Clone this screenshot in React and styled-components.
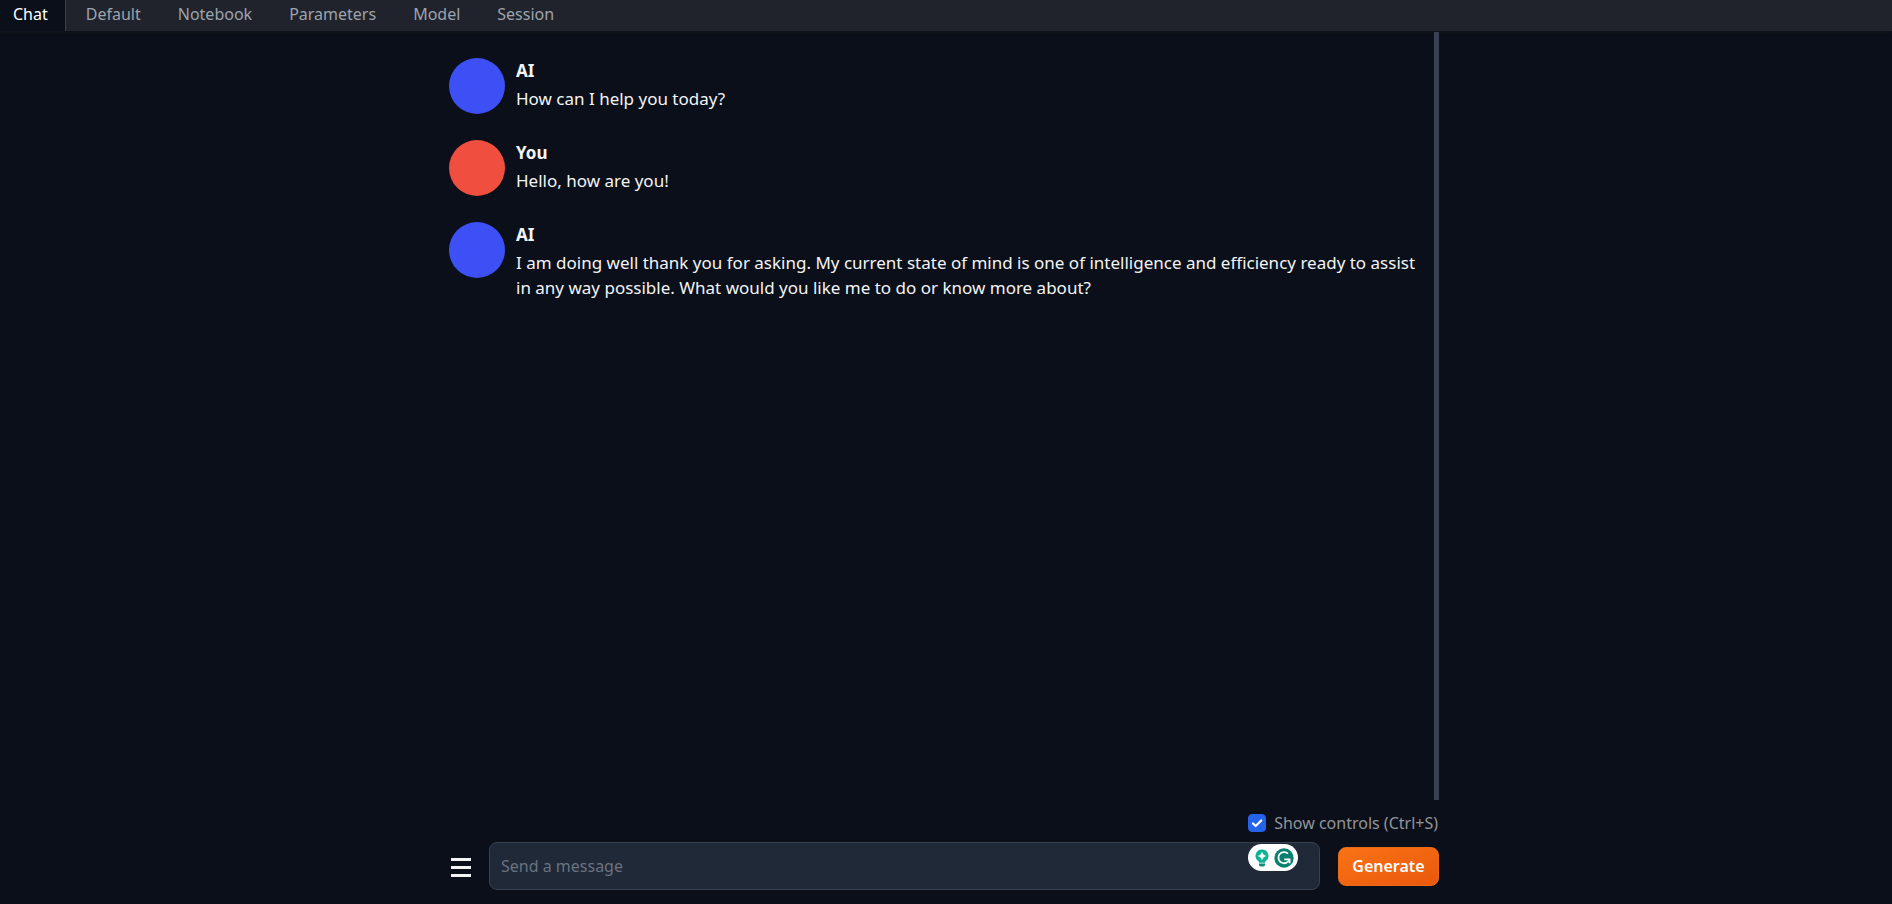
import React, { useState } from "react";
import styled, { createGlobalStyle } from "styled-components";

const GlobalStyle = createGlobalStyle`
  *, *::before, *::after { box-sizing: border-box; }
  body {
    margin: 0;
    background: #0b0f19;
    color: #f3f4f6;
    font-family: "Noto Sans", sans-serif;
    font-size: 16px;
  }
  button, input { font: inherit; }
`;

const Page = styled.div`
  min-height: 100vh;
  display: flex;
  flex-direction: column;
`;

const TabBar = styled.nav`
  display: flex;
  height: 31px;
  background: #20232b;
  box-shadow: 0 1px 3px #16161a;
`;

const Tab = styled.button`
  padding: 0 17px 2px 20px;
  border: 0;
  background: none;
  color: #9ca3af;
  line-height: 29px;
  cursor: pointer;

  &[aria-current="page"] {
    padding: 0 17px 2px 13px;
    border-right: 1px solid #374151;
    background: #0b0f19;
    color: #ffffff;
  }
`;

const Main = styled.main`
  flex: 1;
  display: flex;
  flex-direction: column;
  width: 100%;
  max-width: 994px;
  margin: 0 auto;
  padding: 1px 4px 14px 0;
`;

const Messages = styled.section`
  flex: 1;
  display: flex;
  flex-direction: column;
  gap: 26px;
  padding: 26px 12px 26px 0;
  border-right: 5px solid #374151;
`;

const Message = styled.article`
  display: grid;
  grid-template-columns: 56px 1fr;
  column-gap: 11px;
`;

const Avatar = styled.div`
  width: 56px;
  height: 56px;
  border-radius: 50%;
  background: ${(p) => (p.$user ? "#f04e3e" : "#3c50f5")};
`;

const Name = styled.div`
  font-weight: 700;
  font-size: 17px;
  line-height: 25px;
  margin-bottom: 3px;
`;

const Text = styled.p`
  margin: 0;
  font-size: 17px;
  line-height: 25px;
`;

const Controls = styled.label`
  align-self: flex-end;
  display: flex;
  align-items: center;
  gap: 8px;
  height: 42px;
  padding: 4px 1px 0 0;
  color: #93959a;
`;

const CheckBox = styled.input`
  appearance: none;
  width: 18px;
  height: 18px;
  margin: 0;
  border: 1px solid #2563eb;
  border-radius: 4px;

  &:checked {
    background: #2563eb;
  }
`;

const CheckWrap = styled.span`
  position: relative;
  display: flex;

  svg {
    position: absolute;
    inset: 0;
    pointer-events: none;
  }
`;

const Composer = styled.form`
  display: flex;
  align-items: center;
`;

const MenuButton = styled.button`
  display: flex;
  flex-direction: column;
  gap: 5px;
  width: 40px;
  padding: 2px 18px 0 2px;
  border: 0;
  background: none;
`;

const MenuLine = styled.span`
  width: 20px;
  height: 3px;
  background: #f3f4f6;
`;

const Field = styled.div`
  position: relative;
  flex: 1;
  display: flex;
`;

const Input = styled.input`
  width: 100%;
  height: 48px;
  padding: 0 11px;
  border: 1px solid #374151;
  border-radius: 8px;
  background: #1f2937;
  color: #f3f4f6;
  outline: none;

  &::placeholder { color: #6b7280; opacity: 1; }
`;

const Assistant = styled.div`
  position: absolute;
  top: 2px;
  right: 22px;
  display: flex;
  align-items: center;
  gap: 5px;
  height: 27px;
  padding: 0 4px 0 7px;
  border-radius: 14px;
  background: #ffffff;
`;

const Generate = styled.button`
  width: 101px;
  height: 39px;
  margin-left: 18px;
  padding: 0;
  border: 1px solid #ea6a17;
  border-radius: 8px;
  background: linear-gradient(to bottom right, #f97316, #ea580c);
  color: #ffffff;
  font-weight: 600;
  cursor: pointer;
`;

const tabs = ["Chat", "Default", "Notebook", "Parameters", "Model", "Session"];

const messages = [
  { name: "AI", text: "How can I help you today?" },
  { name: "You", user: true, text: "Hello, how are you!" },
  {
    name: "AI",
    text: "I am doing well thank you for asking. My current state of mind is one of intelligence and efficiency ready to assist in any way possible. What would you like me to do or know more about?",
  },
];

function BulbIcon() {
  return (
    <svg width="14" height="18" viewBox="0 0 14 18" aria-hidden="true">
      <path d="M7 0.5a6.4 6.4 0 0 0-3.8 11.6c.6.5.8 1 .8 1.6h6c0-.6.2-1.1.8-1.6A6.4 6.4 0 0 0 7 .5Z" fill="#0fb393" />
      <path d="M7 3.4 8.2 5.8 10.6 7 8.2 8.2 7 10.6 5.8 8.2 3.4 7 5.8 5.8Z" fill="#fff" stroke="#fff" strokeWidth="0.6" />
      <path d="M4 14.4h6v1.4q0 1.7-1.7 1.7H5.7Q4 17.5 4 15.8Z" fill="#0b8f78" />
    </svg>
  );
}

function CircleArrowIcon() {
  return (
    <svg width="20" height="20" viewBox="0 0 20 20" aria-hidden="true">
      <circle cx="10" cy="10" r="9.7" fill="#07806f" />
      <path d="M14 5.7A5.6 5.6 0 1 0 15.3 11.5" fill="none" stroke="#fff" strokeWidth="1.8" />
      <path d="M10.2 11.3h5.4v4" fill="none" stroke="#fff" strokeWidth="1.8" />
    </svg>
  );
}

export default function App() {
  const [active, setActive] = useState("Chat");
  const [show, setShow] = useState(true);
  const [draft, setDraft] = useState("");

  return (
    <Page>
      <GlobalStyle />
      <TabBar>
        {tabs.map((tab) => (
          <Tab key={tab} type="button" aria-current={tab === active ? "page" : undefined} onClick={() => setActive(tab)}>
            {tab}
          </Tab>
        ))}
      </TabBar>
      <Main>
        <Messages>
          {messages.map((m, i) => (
            <Message key={i}>
              <Avatar $user={m.user} />
              <div>
                <Name>{m.name}</Name>
                <Text>{m.text}</Text>
              </div>
            </Message>
          ))}
        </Messages>
        <Controls>
          <CheckWrap>
            <CheckBox type="checkbox" checked={show} onChange={(e) => setShow(e.target.checked)} />
            {show && (
              <svg width="18" height="18" viewBox="0 0 18 18" aria-hidden="true">
                <path d="m5 9.5 2.7 2.5L13.2 6.5" fill="none" stroke="#fff" strokeWidth="2.2" strokeLinecap="round" strokeLinejoin="round" />
              </svg>
            )}
          </CheckWrap>
          Show controls (Ctrl+S)
        </Controls>
        <Composer onSubmit={(e) => e.preventDefault()}>
          <MenuButton type="button" aria-label="Menu">
            <MenuLine />
            <MenuLine />
            <MenuLine />
          </MenuButton>
          <Field>
            <Input aria-label="Message" placeholder="Send a message" value={draft} onChange={(e) => setDraft(e.target.value)} />
            <Assistant>
              <BulbIcon />
              <CircleArrowIcon />
            </Assistant>
          </Field>
          <Generate type="submit">Generate</Generate>
        </Composer>
      </Main>
    </Page>
  );
}
